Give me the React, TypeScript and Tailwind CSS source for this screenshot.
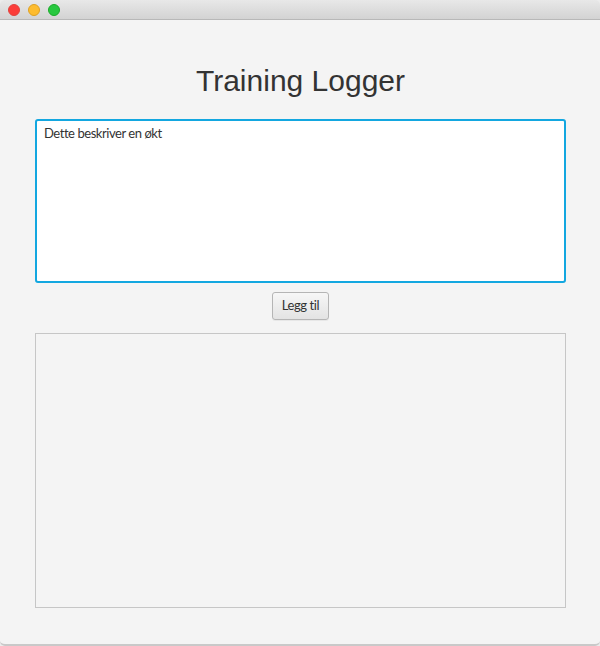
import { useEffect, useRef, useState } from 'react';

const App = () => {
  const [text, setText] = useState('Dette beskriver en økt');
  const areaRef = useRef<HTMLTextAreaElement>(null);

  // fokus på tekstfeltet, markøren til slutt
  useEffect(() => {
    const el = areaRef.current;
    if (el) {
      el.focus();
      el.setSelectionRange(el.value.length, el.value.length);
    }
  }, []);

  return (
    <div className="w-[600px] h-[646px] bg-[#ececec] flex flex-col" style={{ fontFamily: 'Lato, "Liberation Sans", Arial, sans-serif' }}>
      {/* title bar */}
      <div className="h-[20px] shrink-0 flex items-center gap-[8px] pl-[8px] bg-gradient-to-b from-[#e8e8e8] to-[#d3d3d3] border-b border-[#b8b8b8] rounded-t-[5px]">
        <span className="w-[12px] h-[12px] rounded-full bg-[#fc3d39] border border-[#e0443e]" />
        <span className="w-[12px] h-[12px] rounded-full bg-[#fdbc2f] border border-[#dea123]" />
        <span className="w-[12px] h-[12px] rounded-full bg-[#28c840] border border-[#1aab29]" />
      </div>

      <div className="flex-1 bg-[#f4f4f4] flex flex-col items-center pl-[35px] pr-[34px] pt-[43px] border-b-2 border-[#c9c9c9] rounded-b-[5px]">
        <h1 className="text-[30px] leading-[36px] text-[#333333] font-normal" style={{ fontFamily: '"Liberation Sans", Arial, sans-serif' }}>
          Training Logger
        </h1>

        <textarea
          ref={areaRef}
          value={text}
          onChange={(e) => setText(e.target.value)}
          className="mt-[20px] w-full h-[164px] shrink-0 bg-white border-2 border-[#13a7e0] rounded-[3px] px-[7px] py-[4px] text-[13px] leading-[17px] tracking-[-0.45px] text-[#333] resize-none outline-none caret-black"
          style={{ fontFamily: 'Lato, "Liberation Sans", Arial, sans-serif' }}
        />

        <button className="mt-[9px] h-[28px] px-[9px] text-[13px] tracking-[-0.4px] text-[#333] rounded-[3px] border border-[#b5b5b5] bg-gradient-to-b from-[#f7f7f7] to-[#e3e3e3] shadow-[0_1px_0_rgba(0,0,0,0.05)]">
          Legg til
        </button>

        <div className="mt-[13px] w-full h-[275px] border border-[#c6c6c6] bg-[#f4f4f4]" />
      </div>
    </div>
  );
};

export default App;
